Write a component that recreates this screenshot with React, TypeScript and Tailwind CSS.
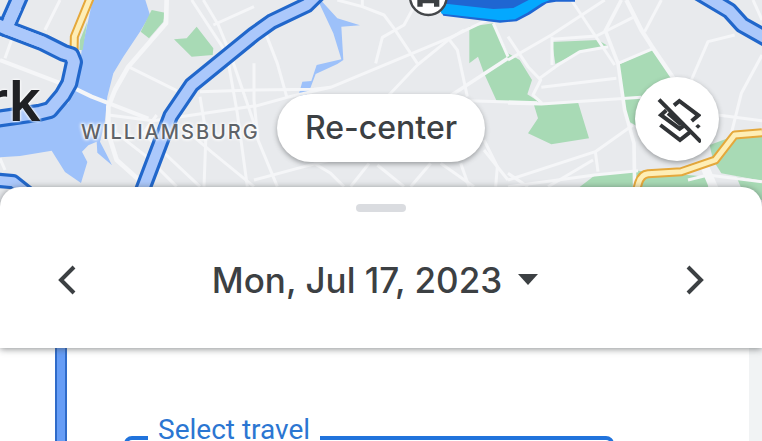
import React from "react";

const Street = ({ d, width = 9 }: { d: string; width?: number }) => (
  <path d={d} fill="none" stroke="#f5f6f8" strokeWidth={width} strokeLinejoin="round" />
);

const Route = ({ d, width = 54 }: { d: string; width?: number }) => (
  <g fill="none" strokeLinejoin="round">
    <path d={d} stroke="#2167cb" strokeWidth={width} />
    <path d={d} stroke="#abc8fb" strokeWidth={width - 19} />
  </g>
);

const Highway = ({ d }: { d: string }) => (
  <g fill="none" strokeLinejoin="round">
    <path d={d} stroke="#e5a83b" strokeWidth={27} />
    <path d={d} stroke="#feeeb6" strokeWidth={15} />
  </g>
);

const MapCanvas = () => (
  <svg
    className="absolute inset-0 h-full w-full"
    viewBox="0 0 2286 621"
    preserveAspectRatio="xMidYMin slice"
    aria-hidden="true"
  >
    <rect width="2286" height="621" fill="#e8eaed" />

    {/* river */}
    <path
      fill="#9dc1fa"
      d="M278 0H436L450 45L420 95L370 170L340 220L322 290L314 370L300 425L318 460L336 496L292 458L290 425L265 436L246 455L262 486L243 549L195 516L155 452L60 468L0 472V370L140 340L205 310L235 240L245 150Z"
    />
    {/* parks */}
    <g fill="#a8dab5">
      <path d="M262 65L248 150H238L240 120Z" />
      <path d="M455 30L495 38L490 65L447 115L422 95Z" />
      <path d="M522 118L560 115L590 80L640 145L638 165L575 170Z" />
    </g>
    <Street d="M180 0L135 90" />
    <Street d="M40 105L15 175" />
    <Street d="M0 180L230 268L275 290L445 356" width={12} />
    <Street d="M500 0L498 70L385 200L345 270L325 320V400L350 480L440 560" width={14} />
    <Street d="M385 200L530 272" />
    <Street d="M575 0L680 160L712 340L742 560" />
    <Street d="M610 0L655 75L690 160L762 370" />
    <Street d="M640 75L762 20" />
    <Street d="M600 275L762 270" />
    <Street d="M325 345L460 362L762 318" />
    <Street d="M600 290L618 400L612 560" />
    <Street d="M545 380L640 460L762 560" />
    <Street d="M470 345L430 400L600 560" />
    <Street d="M350 400L440 470L530 560" />
    <Street d="M0 475L15 510" />

    <g transform="translate(762 0)">
      <path
        fill="#9dc1fa"
        d="M200 0L250 55L318 76L262 80L268 180L250 192L185 222L170 262L155 290L133 287L145 245L172 243L188 195L262 178L238 100L195 8Z"
      />
      <path
        fill="#a8dab5"
        d="M646 80L718 70L762 160L797 180L834 240L820 283L855 305L728 303L690 220L672 170L646 190Z"
      />
      <Street d="M35 100L70 190L98 290" />
      <Street d="M0 270L180 268L230 262L590 112L762 30" />
      <Street d="M0 320L100 292L230 262" />
      <Street d="M250 0L325 20L390 45L420 85L490 190" />
      <Street d="M325 20V-5" />
      <Street d="M480 20L450 75L385 112L365 190" />
      <Street d="M630 90L585 118L490 195L400 290" />
      <Street d="M585 118L610 150L640 290" />
      <Street d="M570 300L762 175" width={11} />
      <Street d="M718 70L762 170" />
      <Street d="M640 302L850 308" />
      <Street d="M0 190V300L12 420L70 560" />
      <Street d="M0 540L150 500L230 480" />
      <Street d="M180 490L230 520L270 560" />
      <Street d="M290 560L345 490" />
      <Street d="M370 495L450 560" />
      <Street d="M470 560L530 490" />
      <Street d="M560 490L660 560" />
      <Street d="M620 490L645 560" />
      <Street d="M690 420L730 500L725 560" />
      <Street d="M690 450L762 540" />
    </g>

    <g transform="translate(1524 0)">
      <g fill="#a8dab5">
        <path d="M132 126L270 120L300 138L215 155L142 192Z" />
        <path d="M330 195L432 148L510 250L390 380L365 366L345 320Z" />
        <path d="M78 315L210 307L243 415L130 433L60 400L90 355Z" />
        <path d="M210 565L262 525L390 512L600 530V565Z" />
        <path d="M605 435L700 400L762 390V542L640 520L615 480Z" />
        <path d="M685 530L762 545V600H740L700 565Z" />
      </g>
      <Street d="M0 110L60 200L98 240L75 285L102 310" />
      <Street d="M0 180L130 105L290 0" />
      <Street d="M190 0L320 195" />
      <Street d="M340 0L292 92L330 190L350 330L378 430L380 560" width={11} />
      <Street d="M355 0L400 90L432 140L500 240" width={13} />
      <Street d="M460 0L410 95" />
      <Street d="M132 110V195" />
      <Street d="M132 118L265 108L375 52" />
      <Street d="M95 235L150 195L215 155L300 140" />
      <Street d="M100 262L325 235" />
      <Street d="M0 310L100 312L400 292" />
      <Street d="M330 190L435 146" />
      <Street d="M0 540L262 455L375 375" />
      <Street d="M262 455L270 515" />
      <Street d="M0 560L260 525L390 512" />
      <Street d="M120 560L255 480" />
      <Street d="M0 520L60 560" />
      <Street d="M550 240L600 125L680 105" />
      <Street d="M762 165L700 280L670 400" />
      <Street d="M630 345L762 362" />
      <Street d="M735 0L762 60" />
      <Street d="M590 500L620 570" width={26} />
      <Street d="M540 540L600 525L762 545" />
      <Highway d="M380 590L392 548Q400 523 420 521L520 515L622 480L680 405L762 398" />
      <Route d="M570 -24L664 32L702 74L790 124" width={52} />
    </g>

    <Highway d="M272 -10L223 110L222 165" />
    <Route d="M62 -15L18 85L130 128L190 158L214 166L222 186L208 250L188 285L150 330L120 338L-20 358" />
    <path d="M20 86L-20 70" stroke="#2167cb" strokeWidth={54} />
    <path d="M48 20L18 85L130 128M24 88L-20 70" fill="none" stroke="#abc8fb" strokeWidth={35} />
    <Route d="M-20 540L40 545L90 585" width={46} />
    <Route d="M966 -30L920 15L815 65L762 103L575 255L512 348L420 590" width={50} />

    {/* active trip */}
    <path fill="#1f66d2" d="M1300 -10H1725V5H1668L1640 10L1590 43L1550 64L1500 68L1330 47Z" />
    <path fill="#04a8fe" d="M1310 8L1480 27L1540 24L1590 -2H1655L1625 10L1582 38L1545 58L1500 61L1325 41Z" />
    <circle cx="1285" cy="-10" r="55" fill="#fff" stroke="#44474a" strokeWidth={7} />
    <path fill="#3c4043" d="M1252 -20H1318V20H1302V10H1268V20H1252Z" />
    <path fill="#fff" d="M1261 -14h10v7h-10zM1299 -14h10v7h-10z" />
  </svg>
);

const LayersOffIcon = () => (
  <svg className="size-12" viewBox="101 93 144 144" fill="none" aria-hidden="true">
    <g stroke="#303336" strokeWidth={12}>
      <path d="M164 124L180 111L237 154L217 171" />
      <path d="M141 139L125 153L181 194L195 184" />
      <path d="M146 148L186 182" />
      <path d="M123 183L182 228L214 203" />
      <path d="M228 187L236 180L244 187L236 194Z" fill="#303336" stroke="none" />
      <path d="M119 107L245 234" />
    </g>
  </svg>
);

const Chevron = ({ d }: { d: string }) => (
  <svg className="h-8 w-5" viewBox="0 0 20 32" fill="none" aria-hidden="true">
    <path d={d} stroke="#3c4043" strokeWidth={4} />
  </svg>
);

const DateSheet = () => (
  <section className="relative z-10 -mt-5 flex shrink-0 flex-col items-center rounded-t-[20px] bg-white pt-[17px] pb-10 shadow-[0_1px_7px_rgba(60,64,67,0.6)]">
    <div className="h-2 w-[50px] rounded-full bg-[#dadce0]" />
    <div className="mt-10 flex w-full items-center justify-between px-[57px]">
      <button type="button" aria-label="Previous day">
        <Chevron d="M17 3L4 16L17 29" />
      </button>
      <button
        type="button"
        className="flex items-center gap-4 pr-3 text-[35px] leading-[56px] font-medium text-[#3c4043]"
      >
        Mon, Jul 17, 2023
        <svg className="h-3 w-5" viewBox="0 0 20 12" aria-hidden="true">
          <path d="M0 0H20L10 11Z" fill="#3c4043" />
        </svg>
      </button>
      <button type="button" aria-label="Next day">
        <Chevron d="M3 3L16 16L3 29" />
      </button>
    </div>
  </section>
);

export default function App() {
  return (
    <main className="flex h-screen flex-col overflow-hidden bg-white font-['Inter',sans-serif]">
      <section className="relative h-[207px] shrink-0 overflow-hidden">
        <MapCanvas />
        <span className="absolute top-[71px] right-[calc(100%-41px)] text-[56px] leading-[60px] font-semibold text-[#202124] [text-shadow:0_0_3px_#fff,0_0_3px_#fff]">
          rk
        </span>
        <span className="absolute top-[120px] left-[81px] text-xl leading-6 font-medium tracking-widest text-[#5f6368] [text-shadow:0_0_2px_#fff,0_0_3px_#fff,0_0_4px_#fff,0_0_4px_#fff]">
          WILLIAMSBURG
        </span>
        <button
          type="button"
          className="absolute top-[94px] left-1/2 h-[68px] w-[208px] -translate-x-1/2 rounded-full bg-white text-[32px] font-medium text-[#3c4043] shadow-[0_2px_5px_rgba(60,64,67,0.45)]"
        >
          Re-center
        </button>
        <button
          type="button"
          aria-label="Hide layers"
          className="absolute top-[77px] right-[43px] flex size-[84px] items-center justify-center rounded-full bg-white shadow-[0_2px_5px_rgba(60,64,67,0.45)]"
        >
          <LayersOffIcon />
        </button>
      </section>

      <DateSheet />

      <section className="flex min-h-0 flex-1">
        <div className="ml-[55px] w-3 border-x-2 border-[#2f6bc9] bg-[#669df6]" />
        <fieldset className="mt-[70px] mr-[135px] ml-[57px] h-[100px] flex-1 rounded-lg border-4 border-[#2173dc] pl-5">
          <legend className="h-10 px-2.5 font-['Roboto',sans-serif] text-[28px] leading-6 text-[#2b76d2]">
            Select travel
          </legend>
        </fieldset>
        <div className="w-[13px] bg-[#f1f3f4]" />
      </section>
    </main>
  );
}
